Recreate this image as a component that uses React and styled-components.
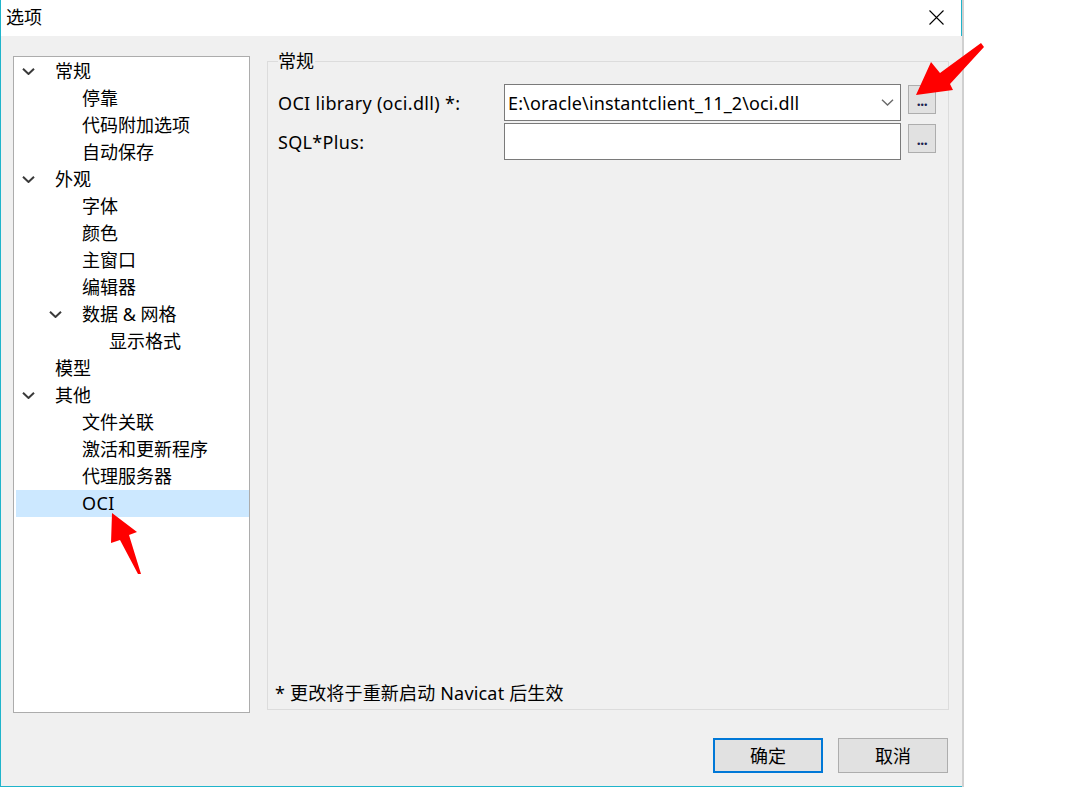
import React from 'react';
import styled, { createGlobalStyle } from 'styled-components';

const GlobalStyle = createGlobalStyle`
  html, body { margin: 0; padding: 0; background: #ffffff; }
  body {
    font-family: "Noto Sans", "Noto Sans CJK SC", sans-serif;
    font-size: 18px;
    color: #000000;
  }
  * { box-sizing: border-box; }
`;

const Page = styled.div`
  position: relative;
  width: 1080px;
  height: 789px;
  overflow: hidden;
  background: #ffffff;
`;

const Window = styled.div`
  width: 962px;
  height: 787px;
  display: flex;
  flex-direction: column;
  border-left: 1px solid #1fb4cb;
  border-bottom: 1px solid #1fb4cb;
  box-shadow: 2px 0 0 #d0d0d0;
  background: #f0f0f0;
`;

const TitleBar = styled.div`
  height: 36px;
  flex: none;
  display: flex;
  align-items: center;
  justify-content: space-between;
  padding: 0 17px 2px 5px;
  background: #ffffff;
  border-right: 1px solid #1fb4cb;
`;

const Title = styled.span`
  font-size: 18px;
  line-height: 24px;
`;

const CloseIcon = styled.svg`
  width: 15px;
  height: 15px;
  display: block;
`;

const Body = styled.div`
  flex: 1;
  display: flex;
  flex-direction: column;
  padding: 20px 13px 13px 12px;
`;

const Main = styled.div`
  height: 657px;
  display: flex;
  gap: 17px;
`;

const Tree = styled.div`
  width: 237px;
  flex: none;
  background: #ffffff;
  border: 1px solid #acacac;
  padding-top: 1px;
  display: flex;
  flex-direction: column;
`;

const TreeRow = styled.div`
  height: 27px;
  display: flex;
  align-items: center;
  margin-left: 2px;
  padding-left: ${p => 6 + p.$level * 27}px;
  background: ${p => (p.$selected ? '#cce8ff' : 'transparent')};
  white-space: pre;
  line-height: 27px;
  letter-spacing: ${p => (p.$latin ? '0.4px' : '0')};
`;

const ChevronSlot = styled.span`
  width: 13px;
  height: 7px;
  margin-right: 20px;
  display: flex;
  flex: none;
`;

const Group = styled.div`
  flex: 1;
  margin: 5px 0 3px 0;
  border: 1px solid #dcdcdc;
  display: flex;
  flex-direction: column;
  padding: 0 10px 5px 10px;
`;

const Legend = styled.span`
  align-self: flex-start;
  margin-top: -12px;
  height: 22px;
  line-height: 22px;
  background: #f0f0f0;
  padding: 0 1px 0 0;
`;

const FormGrid = styled.div`
  margin-top: 12px;
  display: grid;
  grid-template-columns: 226px 397px 35px;
  row-gap: 2px;
  align-items: center;
`;

const FieldLabel = styled.span`
  line-height: 24px;
  letter-spacing: 0.32px;
`;

const Combo = styled.div`
  height: 37px;
  border: 1px solid #7a7a7a;
  background: #ffffff;
  display: flex;
  align-items: center;
  justify-content: space-between;
  padding: 0 6px 0 3px;
  line-height: 24px;
`;

const ComboText = styled.span`
  letter-spacing: 0.12px;
`;

const DotsButton = styled.div`
  align-self: start;
  margin: 1px 0 0 7px;
  width: 28px;
  height: 29px;
  background: #e1e1e1;
  border: 1px solid #adadad;
  display: flex;
  align-items: flex-end;
  justify-content: center;
  padding-bottom: 5px;
  font-size: 14px;
  font-weight: 700;
  line-height: 14px;
  letter-spacing: -0.5px;
  color: #1c2250;
`;

const Footer = styled.span`
  margin-top: auto;
  margin-left: -3px;
  line-height: 22px;
  letter-spacing: 0.18px;
`;

const ButtonRow = styled.div`
  margin-top: 25px;
  margin-right: 1px;
  display: flex;
  justify-content: flex-end;
  gap: 15px;
`;

const DialogButton = styled.div`
  width: 110px;
  height: 35px;
  display: flex;
  align-items: center;
  justify-content: center;
  background: #e1e1e1;
  border: ${p => (p.$primary ? '2px solid #0078d7' : '1px solid #adadad')};
  line-height: 24px;
`;

const Overlay = styled.svg`
  position: absolute;
  left: 0;
  top: 0;
  width: 1080px;
  height: 789px;
  pointer-events: none;
`;

const Chevron = ({ color = '#3a3a3a', width = 2 }) => (
  <svg width="13" height="7" viewBox="0 0 13 7">
    <polyline points="1,0.8 6.5,6 12,0.8" fill="none" stroke={color} strokeWidth={width} />
  </svg>
);

const treeItems = [
  { label: '常规', level: 0, expanded: true },
  { label: '停靠', level: 1 },
  { label: '代码附加选项', level: 1 },
  { label: '自动保存', level: 1 },
  { label: '外观', level: 0, expanded: true },
  { label: '字体', level: 1 },
  { label: '颜色', level: 1 },
  { label: '主窗口', level: 1 },
  { label: '编辑器', level: 1 },
  { label: '数据 & 网格', level: 1, expanded: true },
  { label: '显示格式', level: 2 },
  { label: '模型', level: 0 },
  { label: '其他', level: 0, expanded: true },
  { label: '文件关联', level: 1 },
  { label: '激活和更新程序', level: 1 },
  { label: '代理服务器', level: 1 },
  { label: 'OCI', level: 1, selected: true, latin: true },
];

export default function App() {
  return (
    <Page>
      <GlobalStyle />
      <Window>
        <TitleBar>
          <Title>选项</Title>
          <CloseIcon viewBox="0 0 15 15">
            <path d="M0.5 0.5 L14.5 14.5 M14.5 0.5 L0.5 14.5" stroke="#000" strokeWidth="1.1" fill="none" />
          </CloseIcon>
        </TitleBar>
        <Body>
          <Main>
            <Tree>
              {treeItems.map((it, i) => (
                <TreeRow key={i} $level={it.level} $selected={it.selected} $latin={it.latin}>
                  <ChevronSlot>{it.expanded ? <Chevron /> : null}</ChevronSlot>
                  {it.label}
                </TreeRow>
              ))}
            </Tree>
            <Group>
              <Legend>常规</Legend>
              <FormGrid>
                <FieldLabel>OCI library (oci.dll) *:</FieldLabel>
                <Combo>
                  <ComboText>E:\oracle\instantclient_11_2\oci.dll</ComboText>
                  <Chevron color="#6a6a6a" width={1.4} />
                </Combo>
                <DotsButton>...</DotsButton>
                <FieldLabel>SQL*Plus:</FieldLabel>
                <Combo />
                <DotsButton>...</DotsButton>
              </FormGrid>
              <Footer>* 更改将于重新启动 Navicat 后生效</Footer>
            </Group>
          </Main>
          <ButtonRow>
            <DialogButton $primary>确定</DialogButton>
            <DialogButton>取消</DialogButton>
          </ButtonRow>
        </Body>
      </Window>
      <Overlay viewBox="0 0 1080 789">
        <polygon points="916,95 931,62 940,73 981,43 984,47 950,84 953,90" fill="#ff0000" />
        <polygon points="112,513 137,532 129,535 141,574 138,574 120,540 111,543" fill="#ff0000" />
      </Overlay>
    </Page>
  );
}
